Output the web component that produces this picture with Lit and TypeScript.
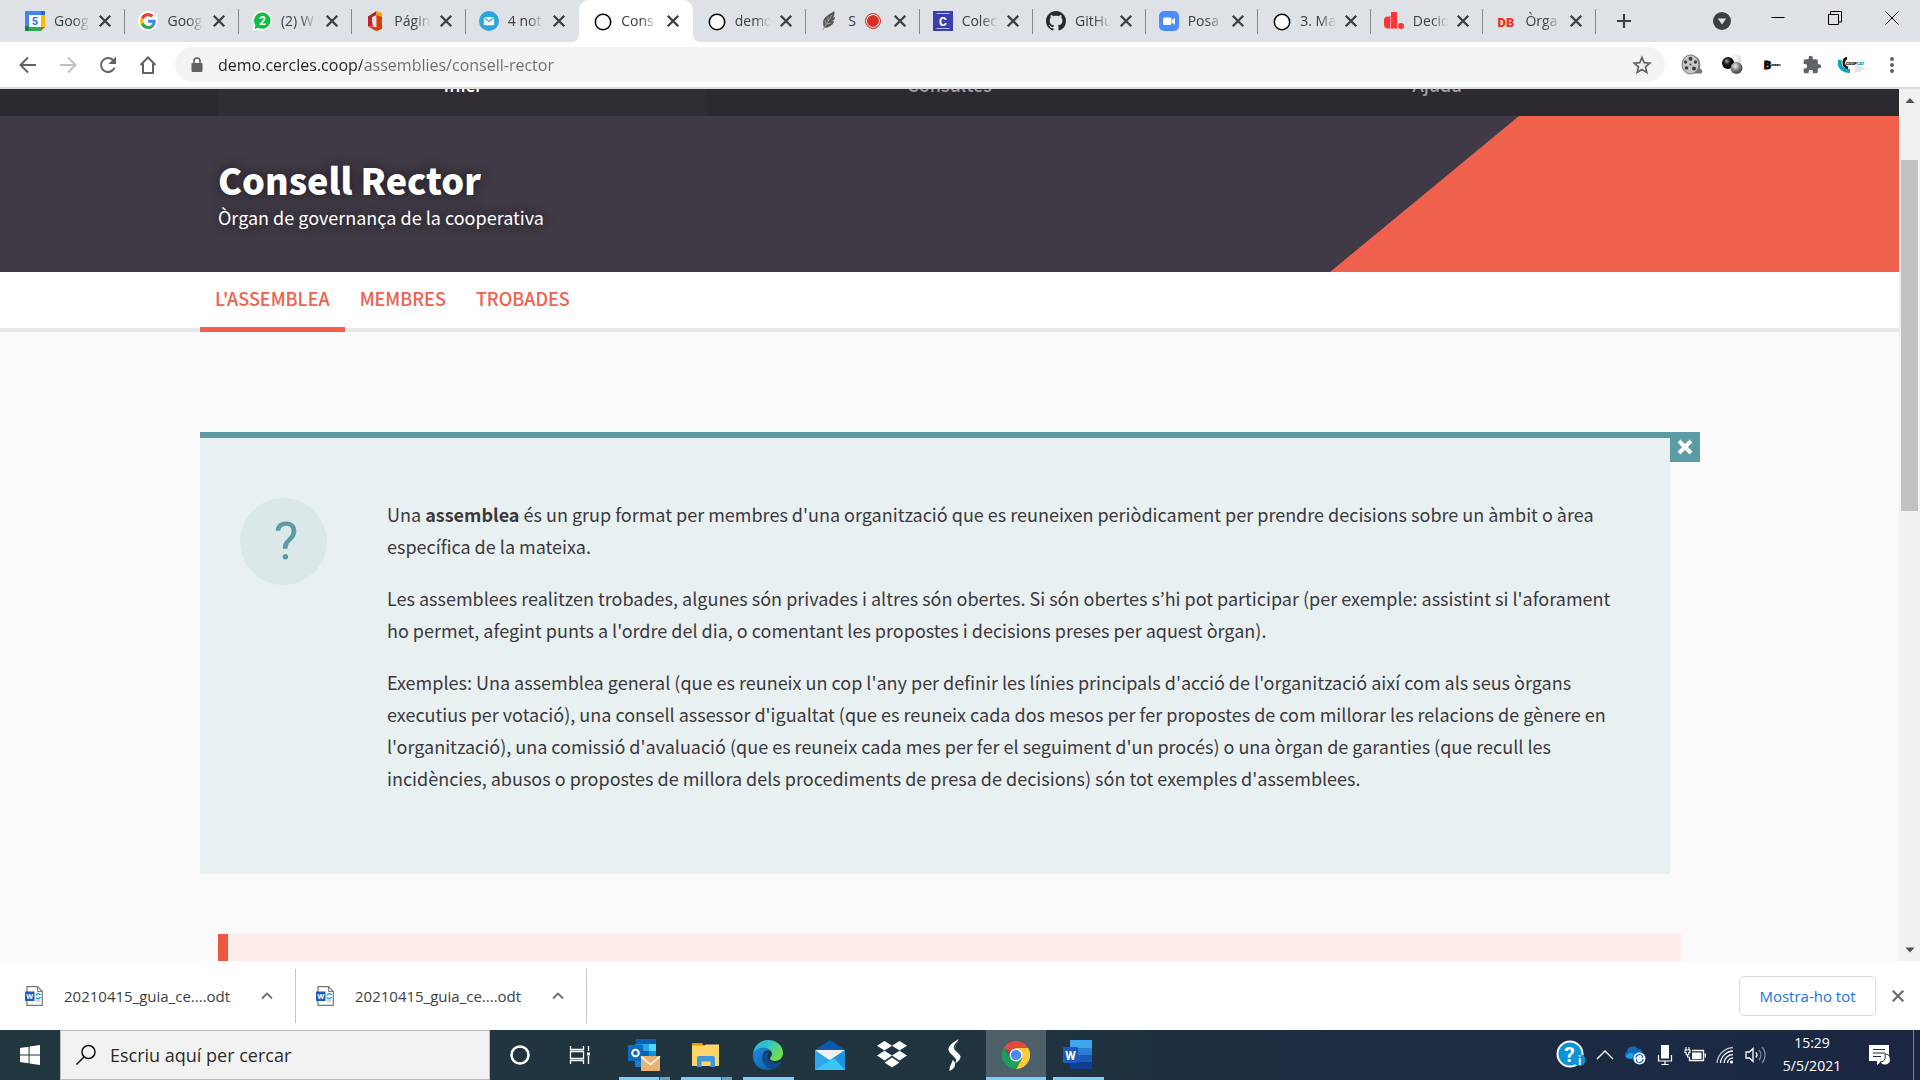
import { LitElement, html, css, svg, nothing, TemplateResult } from "lit";
import { customElement, property } from "lit/decorators.js";
import { classMap } from "lit/directives/class-map.js";

type Icon = TemplateResult;

const icon = (size: number, box: string, body: unknown): Icon =>
  html`<svg width=${size} height=${size} viewBox=${box} fill="none" aria-hidden="true">${body}</svg>`;

/* ---------- favicons ---------- */
const calendarIcon = icon(20, "0 0 20 20", svg`
  <path d="M0 1h16v4H4v11H0z" fill="#4285f4"/><path d="M4 16h12v4H1a1 1 0 0 1-1-1v-3z" fill="#34a853"/>
  <path d="M0 15h4v5H1a1 1 0 0 1-1-1z" fill="#188038"/><path d="M16 4h4v12h-4z" fill="#fbbc04"/>
  <path d="M16 0h3a1 1 0 0 1 1 1v3h-4z" fill="#1967d2"/><path d="M0 1a1 1 0 0 1 1-1h15v4H0z" fill="#4285f4"/>
  <path d="M16 16h4l-4 4z" fill="#ea4335"/><path d="M4 4h12v12H4z" fill="#fff"/>
  <text x="10" y="14" font-size="11" font-weight="700" text-anchor="middle" fill="#1a73e8" font-family="Roboto, sans-serif">5</text>`);

const googleIcon = icon(20, "0 0 48 48", svg`
  <circle cx="24" cy="24" r="24" fill="#fff"/>
  <g transform="translate(5 5) scale(.8)">
  <path fill="#EA4335" d="M24 9.500c3.540 0 6.710 1.220 9.210 3.600l6.850-6.850C35.900 2.380 30.470 0 24 0 14.620 0 6.510 5.380 2.560 13.220l7.980 6.190C12.430 13.720 17.740 9.500 24 9.500z"/>
  <path fill="#4285F4" d="M46.980 24.550c0-1.570-.15-3.090-.38-4.550H24v9.020h12.940c-.58 2.960-2.260 5.480-4.780 7.180l7.730 6c4.510-4.180 7.090-10.360 7.090-17.650z"/>
  <path fill="#FBBC05" d="M10.530 28.590c-.48-1.450-.76-2.990-.76-4.590s.27-3.140.76-4.590l-7.980-6.190C.92 16.460 0 20.120 0 24c0 3.880.92 7.540 2.560 10.780l7.970-6.190z"/>
  <path fill="#34A853" d="M24 48c6.480 0 11.930-2.130 15.890-5.810l-7.730-6c-2.150 1.450-4.920 2.300-8.160 2.300-6.260 0-11.570-4.220-13.470-9.910l-7.980 6.190C6.510 42.620 14.620 48 24 48z"/></g>`);

const whatsappIcon = icon(20, "0 0 20 20", svg`
  <path d="M10.500 0a9.500 9.500 0 0 1 0 19.500c-1.600 0-3.100-.4-4.400-1.100L.5 20l1.400-5.400A9.700 9.700 0 0 1 10.500 0z" fill="#fff"/>
  <path d="M10.500 1.400a8.200 8.200 0 1 1-4.200 15.400l-3.800 1.100 1-3.700a8.200 8.200 0 0 1 7-12.800z" fill="#0cbf42"/>
  <text x="10.500" y="14" font-size="12" font-weight="700" text-anchor="middle" fill="#fff" font-family="Roboto, sans-serif">2</text>`);

const officeIcon = icon(20, "0 0 20 20", svg`
  <path d="M3 5.500 11.500 0v4L7 6v9L3 15.500z" fill="#a4262c"/><path d="M3 15.500 7 14v-3l4 9z" fill="#f0628a"/>
  <path d="M3 5.500V13l4 2V6z" fill="#c8202a"/>
  <path d="M11.500 0 17 2v7l-5.500 2z" fill="#ffa400"/><path d="M11.500 4 17 6v12l-5.500 2-8-4.500 8 .8z" fill="#dd3c00"/>`);

const mailBubbleIcon = icon(20, "0 0 20 20", svg`
  <circle cx="10" cy="10" r="10" fill="#2ba5e0"/><rect x="4.800" y="6" width="10.400" height="8.200" rx="1" fill="#fff"/>
  <path d="m5 6.500 5 4 5-4" stroke="#2ba5e0" stroke-width="1.100"/>`);

const ringIcon = icon(20, "0 0 20 20", svg`<circle cx="11" cy="11" r="7.700" fill="#fff" stroke="#000" stroke-width="1.500"/>`);

const featherIcon = icon(20, "0 0 20 20", svg`
  <path d="M15 0c-2 2-9 5-10.500 9-.9 2.500-.2 6 .5 7.500l-2 3.500 2.500-3c5-.5 9-3 9.500-7-1 .2-1.500.2-2 0 2-.8 3-2 3-4-.8.400-1.500.5-2 .4C15.500 5 16 2 15 0z" fill="#555"/>
  <path d="M5 17 13 4M7 13l-1-4M9 10l0-4M8 13l4-1" stroke="#b9bbbf" stroke-width=".7"/>`);

const collegeIcon = icon(20, "0 0 20 20", svg`
  <path d="M0 0h20v20H0z" fill="#3b3fae"/><path d="M3.500 2.500h13M3.500 17.500h13" stroke="#c6c8ee" stroke-width=".9"/>
  <text x="10" y="14.500" font-size="12" font-weight="700" text-anchor="middle" fill="#fff" font-family="Roboto, sans-serif">C</text>`);

const githubIcon = icon(20, "0 0 16 16", svg`
  <path fill="#24292e" d="M8 0C3.580 0 0 3.580 0 8c0 3.540 2.290 6.530 5.470 7.590.4.070.55-.17.55-.38 0-.19-.01-.82-.01-1.490-2.010.37-2.530-.49-2.690-.94-.09-.23-.48-.94-.82-1.130-.28-.15-.68-.52-.01-.53.63-.01 1.080.58 1.230.82.72 1.210 1.870.87 2.330.66.07-.52.28-.87.510-1.070-1.780-.2-3.640-.89-3.640-3.950 0-.87.310-1.590.82-2.150-.08-.2-.36-1.020.08-2.120 0 0 .67-.21 2.200.82.640-.18 1.320-.27 2-.27s1.360.09 2 .27c1.530-1.040 2.200-.82 2.200-.82.440 1.100.160 1.920.080 2.120.510.560.820 1.270.820 2.150 0 3.070-1.870 3.750-3.650 3.950.290.250.540.730.540 1.480 0 1.070-.01 1.930-.01 2.200 0 .21.150.46.550.38A8.010 8.010 0 0 0 16 8c0-4.420-3.580-8-8-8z"/>`);

const zoomIcon = icon(20, "0 0 20 20", svg`
  <rect width="20" height="20" rx="5" fill="#4a8cff"/><rect x="4" y="6.500" width="8.500" height="7.500" rx="1.500" fill="#fff"/>
  <path d="m13 9 3-2.300v7L13 11.500z" fill="#fff"/>`);

const decidimIcon = icon(20, "0 0 20 20", svg`
  <path d="M7 1h6v16.500H4A4 4 0 0 1 0 13.500V9.500A4 4 0 0 1 4 5.500h3z" fill="#ff3333"/><path d="M6.600 6v11.500" stroke="#dee1e6" stroke-width=".7"/>
  <circle cx="17" cy="15" r="3" fill="#ff3333"/>`);

const dbIcon = icon(20, "0 0 20 20", svg`
  <text x="10" y="16" font-size="13" font-weight="900" text-anchor="middle" fill="#ee3124" font-family="Roboto, sans-serif">DB</text>`);

/* ---------- browser glyphs ---------- */
const cross = (size: number, width: number): Icon =>
  icon(size, "0 0 12 12", svg`<path d="m1.500 1.500 9 9M10.500 1.500l-9 9" stroke="currentColor" stroke-width=${width}/>`);
const backIcon = icon(20, "0 0 20 20", svg`<path d="M18 10H3M10 2.500 2.500 10l7.500 7.500" stroke="currentColor" stroke-width="2"/>`);
const forwardIcon = icon(20, "0 0 20 20", svg`<path d="M2 10h15M10 2.500 17.500 10 10 17.500" stroke="currentColor" stroke-width="2"/>`);
const reloadIcon = icon(20, "0 0 20 20", svg`
  <path d="M16.600 12.500A7 7 0 1 1 15 5" stroke="currentColor" stroke-width="2"/><path d="M18 1.500V9h-7.500z" fill="currentColor"/>`);
const homeIcon = icon(20, "0 0 20 20", svg`<path d="M2.500 10 10 2.500l7.500 7.500M5 8.500V18h10V8.500" stroke="currentColor" stroke-width="2"/>`);
const lockIcon = icon(16, "0 0 16 16", svg`
  <rect x="2.500" y="6" width="11" height="9" rx="1" fill="#5f6368"/><path d="M5 6V4a3 3 0 0 1 6 0v2" stroke="#5f6368" stroke-width="1.600"/>`);
const starIcon = icon(20, "0 0 20 20", svg`
  <path d="m10 2.500 2.200 5.200 5.600.5-4.300 3.700 1.300 5.500-4.800-2.900-4.800 2.900 1.300-5.500-4.300-3.700 5.600-.5z" stroke="#5f6368" stroke-width="1.700"/>`);
const plusIcon = icon(16, "0 0 16 16", svg`<path d="M8 1v14M1 8h14" stroke="#3c4043" stroke-width="2.200"/>`);
const guideIcon = icon(18, "0 0 18 18", svg`<circle cx="9" cy="9" r="9" fill="#3c4043"/><path d="M4.800 6.500h8.400L9 12.500z" fill="#dee1e6"/>`);
const minimiseIcon = icon(14, "0 0 14 14", svg`<path d="M.5 6.500h13" stroke="#000"/>`);
const restoreIcon = icon(14, "0 0 14 14", svg`<path d="M.5 3.500h10v10H.5zM2.500 3V.5h11v10.500H11" stroke="#000"/>`);
const closeWindowIcon = icon(14, "0 0 14 14", svg`<path d="m.5.5 13 13M13.500.5l-13 13" stroke="#000"/>`);

/* ---------- extensions ---------- */
const reelIcon = icon(22, "0 0 22 22", svg`
  <path d="M13 2c5 1 7 6 6 12l2.500 3-1 2.500H11z" fill="#777"/><ellipse cx="9.500" cy="10.500" rx="8.500" ry="9.500" fill="#c6c6c6" stroke="#777"/>
  <g fill="#3c3c3c"><circle cx="9.500" cy="4.800" r="2"/><circle cx="4.500" cy="8" r="1.700"/><circle cx="14.500" cy="8" r="1.700"/><circle cx="5.500" cy="14" r="1.800"/>
  <circle cx="13" cy="14.500" r="2"/><circle cx="9.500" cy="10.500" r="1"/></g>`);
const ballsIcon = html`<svg width="22" height="22" viewBox="0 0 22 22" aria-hidden="true">
  <defs>
    <radialGradient id="ball-black" cx=".4" cy=".35"><stop offset="0" stop-color="#aaa"/><stop offset=".5" stop-color="#222"/><stop offset="1"/></radialGradient>
    <radialGradient id="ball-grey" cx=".4" cy=".35"><stop offset="0" stop-color="#eee"/><stop offset="1" stop-color="#555"/></radialGradient>
    <radialGradient id="ball-white" cx=".4" cy=".35"><stop offset="0" stop-color="#fff"/><stop offset="1" stop-color="#ddd"/></radialGradient>
  </defs>
  <circle cx="15" cy="6" r="5.500" fill="url(#ball-white)"/><circle cx="7" cy="9" r="6" fill="url(#ball-black)"/>
  <circle cx="15.500" cy="14" r="6" fill="url(#ball-grey)"/></svg>`;
const bIcon = icon(20, "0 0 20 20", svg`
  <text x="2" y="14" font-size="11" font-weight="900" fill="#000" stroke="#000" stroke-width=".8" font-family="Roboto, sans-serif">B</text>
  <path d="M9.500 10h9" stroke="#333" stroke-width="2" stroke-dasharray="1.400 .3"/>`);
const puzzleIcon = icon(20, "0 0 24 24", svg`
  <path fill="#5f6368" d="M20.500 11H19V7a2 2 0 0 0-2-2h-4V3.500a2.500 2.500 0 0 0-5 0V5H4a2 2 0 0 0-2 2v3.800h1.500a2.700 2.700 0 0 1 0 5.400H2V20a2 2 0 0 0 2 2h3.800v-1.500a2.700 2.700 0 0 1 5.400 0V22H17a2 2 0 0 0 2-2v-4h1.500a2.500 2.500 0 0 0 0-5z"/>`);
const coopIcon = html`<svg width="28" height="20" viewBox="0 0 28 20" aria-hidden="true">
  <path d="M2 5c-1 5 1 11 10 11" fill="none" stroke="#0aa5b8" stroke-width="4"/>
  <path d="M9 3c-4 1-5 8 1 10" fill="none" stroke="#111" stroke-width="2.500"/>
  <text x="8" y="10" font-size="4" font-weight="700" fill="#111" stroke="#111" stroke-width=".2" font-family="Roboto, sans-serif">COOP<tspan fill="#0aa5b8" stroke="#0aa5b8">CAT</tspan></text>
  <path d="M17 12h7M17 14h10M17 16h6" stroke="#bbb" stroke-width=".8"/></svg>`;
const dotsIcon = icon(20, "0 0 20 20", svg`<g fill="#5f6368"><circle cx="10" cy="4" r="2"/><circle cx="10" cy="10" r="2"/><circle cx="10" cy="16" r="2"/></g>`);

/* ---------- downloads ---------- */
const odtIcon = icon(20, "0 0 20 20", svg`
  <path d="M3 .7h10.500l4.800 4.800v13.800H3z" fill="#fff" stroke="#777" stroke-width="1.200"/><path d="M13.500.7v4.800h4.800" stroke="#777"/>
  <path d="M1 5.500h9.500v9.500H1z" fill="#1b5cbe"/>
  <text x="5.800" y="13.200" font-size="8" font-weight="700" text-anchor="middle" fill="#fff" font-family="Roboto, sans-serif">W</text>
  <path d="M12 9.500a2.500 2.500 0 0 1 4.500-.5M16.500 11a2.500 2.500 0 0 1-4.500.5" stroke="#2b9be0" stroke-width="1.500"/><path d="M12 15h4" stroke="#aaa"/>`);
const chevronIcon = icon(14, "0 0 14 14", svg`<path d="m2 9.500 5-5 5 5" stroke="#6b6e72" stroke-width="1.800"/>`);

/* ---------- taskbar ---------- */
const startIcon = icon(20, "0 0 20 20", svg`<path d="M0 3 8.600 1.800v7.700H0zM9.600 1.600 20 0v9.500H9.600zM0 10.500h8.600v7.700L0 17zM9.600 10.500H20V20L9.600 18.400z" fill="#fff"/>`);
const searchIcon = icon(22, "0 0 22 22", svg`<circle cx="13.500" cy="8" r="6.500" stroke="#111" stroke-width="1.500"/><path d="M9 13 1.500 20.500" stroke="#111" stroke-width="1.500"/>`);
const cortanaIcon = icon(22, "0 0 22 22", svg`<circle cx="11" cy="11" r="8.500" stroke="#fff" stroke-width="2.500"/>`);
const taskViewIcon = icon(22, "0 0 22 22", svg`
  <path d="M1.500 2v3.500h13V2M1.500 20v-3.500h13V20M1.500 7.500h13v7h-13zM19.500 2v5M19.500 12v8" stroke="#fff" stroke-width="1.300"/><path d="M18 8.500h3v3h-3z" fill="#fff"/>`);
const outlookIcon = icon(34, "0 0 34 34", svg`
  <path d="M9 1h20v7H9z" fill="#0a60ae"/><path d="M8 6h7v7H8z" fill="#1490df"/><path d="M15 6h7v7h-7z" fill="#28a8ea"/><path d="M22 6h7v7h-7z" fill="#50d9ff"/>
  <path d="M15 13h7v6h-7z" fill="#0364b8"/><path d="M22 13h7v6h-7z" fill="#1490df"/><path d="M8 19h21v10H8z" fill="#1a7fd0"/>
  <rect x="1" y="7" width="15" height="16" rx="1" fill="#0f6cbd"/><circle cx="8.500" cy="15" r="3.300" stroke="#fff" stroke-width="2"/>
  <path d="M14 18h19v15H14z" fill="#eab26f"/><path d="m14 18.500 9.500 8 9.500-8" stroke="#fff" stroke-width="1.600"/>`);
const folderIcon = icon(30, "0 0 30 30", svg`
  <path d="M1 3h10l2 3H1z" fill="#e29b00"/><path d="M1 5.500h12l2-1h13V25a1 1 0 0 1-1 1H2a1 1 0 0 1-1-1z" fill="#ffd667"/>
  <path d="M6 27V18a2 2 0 0 1 2-2h14a2 2 0 0 1 2 2v9h-4.500v-5.500h-9V27z" fill="#3f97dc"/>`);
const edgeIcon = html`<svg width="32" height="32" viewBox="0 0 32 32" aria-hidden="true">
  <defs>
    <linearGradient id="edge-top" x1="0" y1="0" x2="1" y2=".5"><stop offset="0" stop-color="#2ab5e8"/><stop offset=".55" stop-color="#36c5c0"/><stop offset="1" stop-color="#72e04a"/></linearGradient>
    <linearGradient id="edge-low" x1="0" y1="0" x2="1" y2="1"><stop offset="0" stop-color="#1b8ee0"/><stop offset="1" stop-color="#0c59a4"/></linearGradient>
  </defs>
  <path d="M1 15C2 6 9 1 16 1c9 0 15 6 15 13 0 5-4 8-8 8-3 0-5-1-5-2.500 0-1.500 2-2 2-4.500 0-3-3-5.500-7-5.500S3 11 1 15z" fill="url(#edge-top)"/>
  <path d="M1 17c0-6 6-8.500 10-8.500 3 0 6 1.500 7.500 3.500-5-2-9 2-8 8 .8 5 5 9 10 10-2 1-3.500 1-5 1C7 31 1 25 1 17z" fill="url(#edge-low)"/>
  <path d="M16.500 12.500c-5 1-7 4-6 8.500 1.500 6 6.500 9 10.500 9 4-1 7-4 8.500-6.500.4-.8-.3-1-.9-.7-5 2.500-13 1-13-5 0-2.500 1-4.500.9-5.300z" fill="#0f4a8c"/></svg>`;
const mailIcon = icon(32, "0 0 32 32", svg`
  <path d="M1 11 16 1l15 10v3H1z" fill="#0a5bab"/><path d="M4 11h24v12H4z" fill="#f0f0f0"/><path d="M1 11v20h30V11L16 21z" fill="#29a9ea"/>
  <path d="M1 11h30L17 20.500a2 2 0 0 1-2 0z" fill="#f3f1ef"/><path d="m16 21 15-10v20z" fill="#1e93dd"/><path d="M1 31h30L20 19z" fill="#3cc3f5"/>`);
const dropboxIcon = icon(30, "0 0 30 30", svg`
  <g fill="#fff"><path d="m7.500 1 7.500 4.800-7.500 4.800L0 5.800zM22.500 1 30 5.800l-7.500 4.800L15 5.800zM7.500 10.800l7.500 4.800-7.500 4.800L0 15.600zM22.500 10.800l7.500 4.800-7.500 4.800-7.500-4.800zM15 17.500l7.500 5L15 27.500l-7.500-5z"/></g>`);
const sketchIcon = icon(32, "0 0 32 32", svg`
  <path d="M21 0c-6 3-11 7-10.500 11 .3 2.500 5 6 7 8.500 1 1.300.5 3-.5 5 3-2 6-4.500 5.500-7-.5-2.500-5.500-5.500-6.500-8C15 7 18 4 21 0z" fill="#fff"/>
  <path d="M20 1c-1 5-3 5-3.500 9M11.500 32c4-2 6-4 5.500-8-.3-1-1-2-2.500-3-.5 4-3 5-3 11z" fill="#fff"/>`);
const chromeIcon = icon(28, "0 0 48 48", svg`
  <path d="M24 24 3.200 12A24 24 0 0 1 44.800 12z" fill="#e24a3b"/><path d="M24 24V12h20.800A24 24 0 0 1 24 48l10.400-18z" fill="#fccc3a"/>
  <path d="m3.200 12 10.400 18L24 24l10.400 6L24 48A24 24 0 0 1 3.200 12z" fill="#1c9f5a"/>
  <circle cx="24" cy="24" r="11" fill="#fff"/><circle cx="24" cy="24" r="9" fill="#4c8bf5"/>`);
const wordIcon = icon(32, "0 0 32 32", svg`
  <path d="M8 1h22v8H8z" fill="#41a5ee"/><path d="M8 9h22v7H8z" fill="#2b7cd3"/><path d="M8 16h22v7H8z" fill="#185abd"/><path d="M8 23h22v7H8z" fill="#103f91"/>
  <rect x="1" y="8" width="15" height="16" rx="1" fill="#185abd"/>
  <text x="8.500" y="20.500" font-size="12" font-weight="700" text-anchor="middle" fill="#fff" font-family="Roboto, sans-serif">W</text>`);

/* ---------- tray ---------- */
const helpTrayIcon = icon(30, "0 0 30 30", svg`
  <circle cx="14" cy="14" r="12.500" fill="#0a94d6" stroke="#fff" stroke-width="2"/>
  <text x="13.500" y="21.500" font-size="21" font-weight="700" text-anchor="middle" fill="#fff" font-family="Roboto, sans-serif">?</text>
  <circle cx="23.500" cy="20" r="6" fill="#0a94d6"/><text x="23.500" y="24.500" font-size="12" font-weight="700" text-anchor="middle" fill="#fff" font-family="Roboto, sans-serif">i</text>`);
const trayUpIcon = icon(18, "0 0 18 18", svg`<path d="m1 13 8-8 8 8" stroke="#fff" stroke-width="1.300"/>`);
const cloudIcon = icon(22, "0 0 22 22", svg`
  <path d="M4 15a4 4 0 0 1-1-7.500A6 6 0 0 1 14 5c3 0 4.500 2 4.500 4v6z" fill="#0f6cbd"/><path d="M8 15 2 13c1-4 6-5 8-3z" fill="#2a9be8"/>
  <circle cx="15.500" cy="14.500" r="6" fill="#fff"/><path d="M12 14a3.600 3.600 0 0 1 6.500-2v2M19 15a3.600 3.600 0 0 1-6.500 2v-2" stroke="#0f6cbd" stroke-width="1.200"/>`);
const micIcon = icon(22, "0 0 22 22", svg`
  <path d="M7 1h8v13.500H7z" fill="#fff"/><path d="M4.500 11v6h13v-6M11 17v3.500M7.500 20.500h7" stroke="#fff" stroke-width="1.200"/>`);
const batteryIcon = icon(22, "0 0 22 22", svg`
  <path d="M8 6.500h11.500v10H5.500V13M21.300 9.500v4" stroke="#fff" stroke-width="1.300"/><path d="M8 8.500h9.500v6.500H8z" fill="#fff"/>
  <path d="M2 3v3M5 3v3M1 6h5v2.500H4.800v2.300H2.200V8.500H1zM3.500 11v2h2" stroke="#fff" stroke-width="1.100"/>`);
const wifiIcon = icon(20, "0 0 20 20", svg`
  <g stroke="#fff" stroke-width="1.300"><path d="M2 18A17 17 0 0 1 18 2.500" opacity=".7"/><path d="M5.500 18A13 13 0 0 1 18 6"/><path d="M9 18a9 9 0 0 1 9-8.500"/><path d="M12.500 18a5.500 5.500 0 0 1 5.500-5"/></g><circle cx="16.500" cy="17" r="1.600" fill="#fff"/>`);
const volumeIcon = icon(22, "0 0 22 22", svg`
  <path d="M2 8h3.500L9 4.500v13L5.500 14H2z" stroke="#fff" stroke-width="1.300"/><path d="M12 8.500a4 4 0 0 1 0 5" stroke="#fff" stroke-width="1.300"/>
  <path d="M15 6a7.500 7.500 0 0 1 0 10M18 3a12 12 0 0 1 0 16" stroke="#fff" stroke-width="1.200" opacity=".45"/>`);
const notesIcon = icon(22, "0 0 22 22", svg`
  <path d="M1 1h20v16h-7l-5 4v-4H1z" fill="#fff"/><path d="M5 5.500h12M5 9h12M5 12.500h8" stroke="#1c2a42" stroke-width="1.200"/>
  <path d="M17 10c1 5-1 8-5 8a5.500 5.500 0 1 0 5-8z" fill="#fff" stroke="#1c2a42"/>`);

interface Tab { title: string; icon: Icon; active?: boolean; plain?: boolean; recording?: boolean; }

const TABS: Tab[] = [
  { title: "Goog", icon: calendarIcon },
  { title: "Goog", icon: googleIcon },
  { title: "(2) W", icon: whatsappIcon },
  { title: "Págin", icon: officeIcon },
  { title: "4 not", icon: mailBubbleIcon, plain: true },
  { title: "Cons", icon: ringIcon, active: true, plain: true },
  { title: "demo", icon: ringIcon },
  { title: "S", icon: featherIcon, recording: true },
  { title: "Colec", icon: collegeIcon },
  { title: "GitHu", icon: githubIcon },
  { title: "Posa", icon: zoomIcon },
  { title: "3. Ma", icon: ringIcon },
  { title: "Decid", icon: decidimIcon },
  { title: "Òrga", icon: dbIcon },
];

@customElement("browser-tabs")
class BrowserTabs extends LitElement {
  static styles = css`
    :host { display: flex; height: 42px; background: #dee1e6; font: 14px/20px "Open Sans", "Noto Sans", sans-serif; color: #3c4043; }
    button { border: 0; padding: 0; background: none; color: inherit; font: inherit; display: flex; align-items: center; justify-content: center; }
    .strip { flex: 1; display: flex; padding-left: 12px; min-width: 0; }
    .tab { flex: 100 1 0; min-width: 0; display: flex; align-items: center; position: relative; box-sizing: border-box; padding: 0 13px; }
    .tab:nth-child(-n + 9) { flex-grow: 101; }
    .tab::after { content: ""; position: absolute; right: 0; top: 9px; width: 1px; height: 25px; background: #85888c; }
    .tab.plain::after { display: none; }
    .tab.active { background: #fff; border-radius: 10px 10px 0 0; }
    .tab.active::before, .tab.active::after { content: ""; display: block; position: absolute; top: auto; bottom: 0; width: 8px; height: 8px; }
    .tab.active::before { left: -8px; background: radial-gradient(circle at 0 0, transparent 8px, #fff 8px); }
    .tab.active::after { right: -8px; background: radial-gradient(circle at 100% 0, transparent 8px, #fff 8px); }
    .title { flex: 1; min-width: 0; margin-left: 9px; justify-content: flex-start; overflow: hidden; white-space: nowrap; line-height: 24px;
      -webkit-mask-image: linear-gradient(to right, #000 55%, transparent 100%); mask-image: linear-gradient(to right, #000 55%, transparent 100%); }
    .title.short { flex: 0 0 10px; -webkit-mask-image: none; mask-image: none; }
    .rec { width: 16px; height: 16px; margin: 0 auto 0 7px; box-sizing: border-box; border-radius: 50%; background: #d93025; border: 1px solid #d93025; box-shadow: inset 0 0 0 1px #fff; }
    .shut { flex: none; width: 14px; margin-left: 8px; color: #3c4043; }
    .icon { display: flex; flex: none; }
    .window { flex: none; display: flex; width: 324px; }
    .window button { flex: none; height: 36px; width: 57px; }
    .window .new { width: 56px; height: 42px; }
    .window .guide { width: 54px; height: 42px; margin-left: 43px; }
  `;
  render() {
    return html`
      <div class="strip" role="tablist">
        ${TABS.map((t) => html`
          <div class=${classMap({ tab: true, active: !!t.active, plain: !!t.plain })}>
            <span class="icon">${t.icon}</span>
            <button class=${classMap({ title: true, short: !!t.recording })} role="tab" aria-selected=${t.active ? "true" : "false"}>${t.title}</button>
            ${t.recording ? html`<span class="rec"></span>` : nothing}
            <button class="shut" aria-label="Tanca la pestanya">${cross(14, 2)}</button>
          </div>`)}
      </div>
      <div class="window">
        <button class="new" aria-label="Pestanya nova">${plusIcon}</button>
        <button class="guide" aria-label="Cerca pestanyes">${guideIcon}</button>
        <button aria-label="Minimitza">${minimiseIcon}</button>
        <button aria-label="Restaura">${restoreIcon}</button>
        <button aria-label="Tanca">${closeWindowIcon}</button>
      </div>`;
  }
}

@customElement("browser-toolbar")
class BrowserToolbar extends LitElement {
  static styles = css`
    :host { display: flex; align-items: center; height: 45px; background: #fff; border-bottom: 2px solid #dadce0; padding: 0 8px; color: #5f6368; }
    button { border: 0; padding: 0; background: none; color: inherit; display: flex; align-items: center; justify-content: center; width: 40px; height: 36px; }
    .off { color: #bdc1c6; }
    .address { flex: 1; display: flex; align-items: center; height: 35px; border-radius: 18px; background: #f1f3f4; margin: 0 7px; padding-left: 14px; }
    .url { flex: 1; min-width: 0; border: 0; outline: 0; padding: 0; margin-left: 13px; font: 16px/24px "Open Sans", "Noto Sans", sans-serif;
      color: transparent; background: linear-gradient(to right, #202124 144px, #696c70 144px); -webkit-background-clip: text; background-clip: text; }
    .star { width: 46px; }
  `;
  render() {
    return html`
      <button aria-label="Enrere">${backIcon}</button>
      <button class="off" aria-label="Endavant">${forwardIcon}</button>
      <button aria-label="Torna a carregar">${reloadIcon}</button>
      <button aria-label="Inici">${homeIcon}</button>
      <div class="address">
        ${lockIcon}
        <input class="url" type="text" aria-label="Adreça" value="demo.cercles.coop/assemblies/consell-rector" />
        <button class="star" aria-label="Afegeix als preferits">${starIcon}</button>
      </div>
      ${[reelIcon, ballsIcon, bIcon, puzzleIcon, coopIcon, dotsIcon].map((i) => html`<button aria-label="Extensió">${i}</button>`)}`;
  }
}

@customElement("assembly-page")
class AssemblyPage extends LitElement {
  static styles = css`
    :host { display: block; background: #fafafa; color: #3d393c; font: 400 18px/32px "Noto Sans CJK KR", "Source Sans Pro", sans-serif; }
    a { color: inherit; text-decoration: none; }
    .wrap { margin: 0 218px; }
    .wide { margin: 0 199px 0 200px; }
    .top { background: #2c2930; }
    .menu { display: grid; grid-template-columns: repeat(3, 1fr); text-align: center; color: #a09da3; font-weight: 500; }
    .menu a { padding: 17px 0 16px; }
    .menu .on { background: #312d34; color: #fff; }
    .hero { background: #403a46; position: relative; }
    .hero::after { content: ""; position: absolute; inset: 0 0 0 auto; width: 569px; background: #ef604d; clip-path: polygon(189px 0, 100% 0, 100% 100%, 0 100%); }
    .intro { padding: 41px 0 39px; color: #fff; text-shadow: 0 0 12px #1c191f; }
    h1 { margin: 0; font-size: 36px; line-height: 44px; font-weight: 900; }
    .intro p { margin: 0; }
    .sections { background: #fff; border-bottom: 4px solid #e8e8e8; }
    .sections nav { display: flex; }
    .sections a { height: 56px; line-height: 52px; padding: 0 15px; color: #ef604d; font-weight: 500; text-transform: uppercase; }
    .sections .on { box-shadow: 0 4px #ef604d, inset 0 -1px #ef604d; }
    .callout { margin-top: 100px; display: flex; align-items: flex-start; }
    .panel { flex: 1; display: flex; align-items: flex-start; gap: 60px; background: #e8f0f2; border-top: 6px solid #5a9ba6; padding: 60px 40px; }
    .mark { flex: none; width: 87px; height: 87px; border-radius: 50%; background: #dae8e8; color: #5a9ba6; font: 52px/88px Roboto, sans-serif; text-align: center; text-indent: 5px; }
    .text { min-height: 315px; }
    .text p { margin: 0 0 20px; }
    .shut { width: 30px; height: 30px; padding: 0; border: 0; background: #5a9ba6; color: #fff; display: flex; align-items: center; justify-content: center; }
    .alert { margin-top: 60px; height: 80px; background: #fdecea; border-left: 10px solid #ee573f; }
  `;
  render() {
    return html`
      <header class="top"><nav class="wrap menu">
        <a class="on" href="#inici">Inici</a><a href="#consultes">Consultes</a><a href="#ajuda">Ajuda</a>
      </nav></header>
      <section class="hero"><div class="wrap intro">
        <h1>Consell Rector</h1>
        <p>Òrgan de governança de la cooperativa</p>
      </div></section>
      <div class="sections"><nav class="wide">
        <a class="on" href="#assemblea">L'assemblea</a><a href="#membres">Membres</a><a href="#trobades">Trobades</a>
      </nav></div>
      <section class="wide callout">
        <div class="panel">
          <div class="mark">?</div>
          <div class="text">
            <p>Una <strong>assemblea</strong> és un grup format per membres d'una organització que es reuneixen periòdicament per prendre decisions sobre un àmbit o àrea específica de la mateixa.</p>
            <p>Les assemblees realitzen trobades, algunes són privades i altres són obertes. Si són obertes s’hi pot participar (per exemple: assistint si l'aforament ho permet, afegint punts a l'ordre del dia, o comentant les propostes i decisions preses per aquest òrgan).</p>
            <p>Exemples: Una assemblea general (que es reuneix un cop l'any per definir les línies principals d'acció de l'organització així com als seus òrgans executius per votació), una consell assessor d'igualtat (que es reuneix cada dos mesos per fer propostes de com millorar les relacions de gènere en l'organització), una comissió d'avaluació (que es reuneix cada mes per fer el seguiment d'un procés) o una òrgan de garanties (que recull les incidències, abusos o propostes de millora dels procediments de presa de decisions) són tot exemples d'assemblees.</p>
          </div>
        </div>
        <button class="shut" aria-label="Tanca l'avís">${cross(16, 3)}</button>
      </section>
      <div class="wrap alert"></div>`;
  }
}

@customElement("download-shelf")
class DownloadShelf extends LitElement {
  @property({ type: Array }) files = ["20210415_guia_ce....odt", "20210415_guia_ce....odt"];
  static styles = css`
    :host { display: flex; align-items: center; height: 69px; background: #fff; font: 15px/20px "Open Sans", "Noto Sans", sans-serif; color: #3c4043; }
    button { border: 0; padding: 0; background: none; color: inherit; font: inherit; display: flex; align-items: center; justify-content: center; }
    .file { display: flex; align-items: center; box-sizing: border-box; width: 291px; height: 54px; border-right: 1px solid #c4c6c9; padding-left: 19px; }
    .file:first-child { width: 296px; padding-left: 24px; }
    .open { gap: 20px; flex: 1; justify-content: flex-start; white-space: nowrap; }
    .more { width: 56px; height: 40px; }
    .all { margin-left: auto; box-sizing: border-box; width: 137px; height: 40px; border: 1px solid #dadce0; border-radius: 5px; color: #1a73e8; }
    .shut { width: 44px; height: 40px; color: #6b6e72; }
  `;
  render() {
    return html`
      ${this.files.map((f) => html`<div class="file">
        <button class="open">${odtIcon}<span>${f}</span></button>
        <button class="more" aria-label="Opcions de la baixada">${chevronIcon}</button>
      </div>`)}
      <button class="all">Mostra-ho tot</button>
      <button class="shut" aria-label="Tanca la barra de baixades">${cross(14, 2)}</button>`;
  }
}

const APPS: { name: string; icon: Icon; state: string }[] = [
  { name: "Outlook", icon: outlookIcon, state: "open many" },
  { name: "Explorador de fitxers", icon: folderIcon, state: "open many" },
  { name: "Edge", icon: edgeIcon, state: "open" },
  { name: "Correu", icon: mailIcon, state: "" },
  { name: "Dropbox", icon: dropboxIcon, state: "" },
  { name: "Notes", icon: sketchIcon, state: "" },
  { name: "Chrome", icon: chromeIcon, state: "open current" },
  { name: "Word", icon: wordIcon, state: "open" },
];

@customElement("task-bar")
class TaskBar extends LitElement {
  static styles = css`
    :host { display: flex; height: 50px; background: linear-gradient(to right, #20373f, #20343f 50%, #1c2b42 80%, #1b2742); color: #fff; font: 15px/23px "Open Sans", "Noto Sans", sans-serif; }
    button { border: 0; padding: 0; background: none; color: inherit; font: inherit; display: flex; align-items: center; justify-content: center; width: 60px; }
    .search { display: flex; align-items: center; gap: 13px; box-sizing: border-box; width: 430px; background: #f2f2f2; border: 1px solid #bdbdbd; padding-left: 14px; }
    .query { flex: 1; min-width: 0; border: 0; outline: 0; padding: 0; background: none; font: 18px/24px "Open Sans", "Noto Sans", sans-serif; color: #2b2b2b; }
    .query::placeholder { color: #2b2b2b; opacity: 1; }
    .apps { display: flex; gap: 2px; margin-left: 4px; }
    .app { position: relative; }
    .open::after { content: ""; position: absolute; left: 5px; right: 4px; bottom: 0; height: 3px; background: #76d0f8; }
    .many::after { background: linear-gradient(to right, #76d0f8 40px, #3d5c70 40px, #3d5c70 41px, #66a3c4 41px); }
    .current { background: #4d5f68; }
    .current::after { left: 0; right: 0; }
    .tray { margin-left: auto; display: flex; }
    .tray button { width: 30px; }
    .tray .help { width: 38px; }
    .tray .clock { width: 84px; flex-direction: column; font-size: 14px; padding-bottom: 2px; }
    .tray .notes { width: 50px; }
    .tray .desktop { width: 7px; margin-left: 9px; border-left: 1px solid #7a8294; }
  `;
  render() {
    return html`
      <button aria-label="Inici">${startIcon}</button>
      <label class="search">${searchIcon}<input class="query" type="text" aria-label="Cerca" placeholder="Escriu aquí per cercar" /></label>
      <button aria-label="Cortana">${cortanaIcon}</button>
      <button aria-label="Visualització de tasques">${taskViewIcon}</button>
      <div class="apps">${APPS.map((a) => html`<button class="app ${a.state}" aria-label=${a.name}>${a.icon}</button>`)}</div>
      <div class="tray">
        <button class="help" aria-label="Ajuda">${helpTrayIcon}</button>
        ${[trayUpIcon, cloudIcon, micIcon, batteryIcon, wifiIcon, volumeIcon].map((i) => html`<button aria-label="Estat del sistema">${i}</button>`)}
        <button class="clock"><span>15:29</span><span>5/5/2021</span></button>
        <button class="notes" aria-label="Notificacions">${notesIcon}</button>
        <button class="desktop" aria-label="Mostra l'escriptori"></button>
      </div>`;
  }
}

@customElement("app-root")
class AppRoot extends LitElement {
  static styles = css`
    :host { display: flex; flex-direction: column; height: 100vh; overflow: hidden; }
    .view { flex: 1; min-height: 0; display: flex; }
    .scroll { flex: 1; min-width: 0; overflow: hidden; background: #fafafa; }
    .page { margin-top: -38px; }
    .bar { flex: none; width: 21px; background: #f1f1f1; display: flex; flex-direction: column; align-items: center; }
    .bar svg { flex: none; margin: 2px 0; }
    .track { flex: 1; display: flex; flex-direction: column; padding-top: 49px; }
    .thumb { width: 17px; height: 45%; background: #c1c1c1; }
  `;
  render() {
    return html`
      <browser-tabs></browser-tabs>
      <browser-toolbar></browser-toolbar>
      <div class="view">
        <div class="scroll"><assembly-page class="page"></assembly-page></div>
        <div class="bar">
          ${icon(18, "0 0 18 18", svg`<path d="M4.500 12 9 7l4.500 5z" fill="#505050"/>`)}
          <div class="track"><div class="thumb"></div></div>
          ${icon(18, "0 0 18 18", svg`<path d="M4.500 6.500 9 11.500l4.500-5z" fill="#505050"/>`)}
        </div>
      </div>
      <download-shelf></download-shelf>
      <task-bar></task-bar>`;
  }
}
